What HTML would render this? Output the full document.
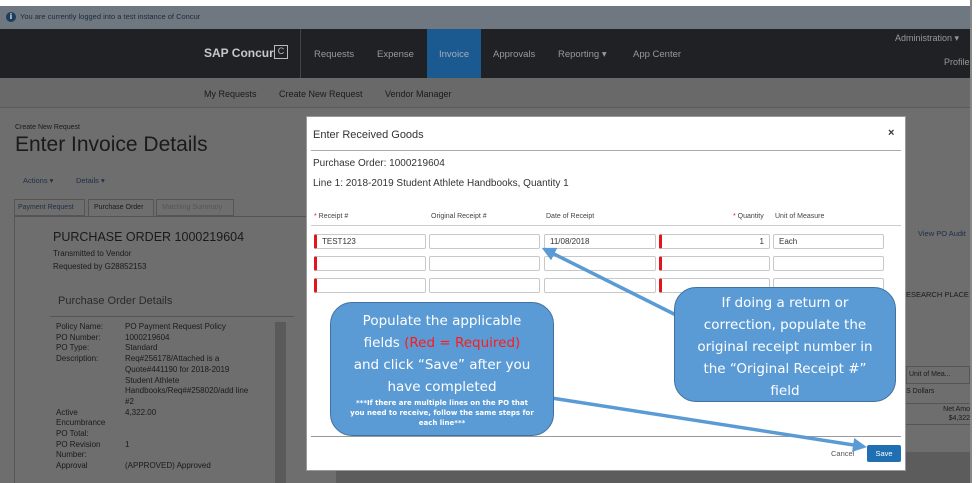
<!DOCTYPE html>
<html><head><meta charset="utf-8"><style>
*{box-sizing:border-box;margin:0;padding:0}
html,body{width:978px;height:483px;overflow:hidden}
body{background:rgb(110,110,110);font-family:"Liberation Sans",sans-serif;position:relative}
.a{position:absolute;white-space:nowrap}
.inp{position:absolute;height:15px;border:1px solid #c8c8c8;border-radius:2px;background:#fff;font-size:8px;color:#333;padding:3px 5px;line-height:8px}
.req{border-left:3px solid #e0161c}
.call{position:absolute;background:#5b9bd5;border:1.5px solid #41719c;border-radius:22px;color:#fff;text-align:center;font-family:"DejaVu Sans",sans-serif}
</style></head><body>
<div class="a" style="left:0;top:0;width:978px;height:6px;background:#fff"></div>
<div class="a" style="left:970px;top:0;width:8px;height:483px;background:#fff;border-left:2px solid #888"></div>
<!-- info bar -->
<div class="a" style="left:0;top:6px;width:970px;height:23px;background:rgb(111,120,128)"></div>
<div class="a" style="left:6px;top:12px;width:10px;height:10px;border-radius:50%;background:#1c3c5c;color:#fff;font-size:8px;text-align:center;line-height:10px;font-weight:bold">i</div>
<div class="a" style="left:20px;top:12px;font-size:7.5px;color:#1d2a3a">You are currently logged into a test instance of Concur</div>
<!-- nav -->
<div class="a" style="left:0;top:29px;width:970px;height:49px;background:rgb(31,33,36)"></div>
<div class="a" style="left:204px;top:46px;font-size:12px;font-weight:bold;color:#c8c8c8">SAP Concur</div>
<div class="a" style="left:274px;top:45px;width:14px;height:14px;border:1.5px solid #bbb;color:#bbb;font-size:9px;text-align:center;line-height:11px">C</div>
<div class="a" style="left:300px;top:29px;width:1px;height:49px;background:#444"></div>
<div class="a" style="left:427px;top:29px;width:54px;height:49px;background:rgb(26,90,145)"></div>
<div class="a" style="left:314px;top:49px;font-size:9.5px;color:#999">Requests</div>
<div class="a" style="left:377px;top:49px;font-size:9.5px;color:#999">Expense</div>
<div class="a" style="left:439px;top:49px;font-size:9.5px;color:#aab">Invoice</div>
<div class="a" style="left:493px;top:49px;font-size:9.5px;color:#999">Approvals</div>
<div class="a" style="left:558px;top:49px;font-size:9.5px;color:#999">Reporting ▾</div>
<div class="a" style="left:633px;top:49px;font-size:9.5px;color:#999">App Center</div>
<div class="a" style="left:895px;top:33px;font-size:9px;color:#999">Administration ▾</div>
<div class="a" style="left:944px;top:57px;font-size:9px;color:#999">Profile</div>
<!-- subnav -->
<div class="a" style="left:0;top:78px;width:970px;height:30px;background:rgb(105,105,105);border-bottom:1px solid #5a5a5a"></div>
<div class="a" style="left:204px;top:89px;font-size:9px;color:#1a1a1a">My Requests</div>
<div class="a" style="left:279px;top:89px;font-size:9px;color:#1a1a1a">Create New Request</div>
<div class="a" style="left:385px;top:89px;font-size:9px;color:#1a1a1a">Vendor Manager</div>
<!-- left content -->
<div class="a" style="left:15px;top:124px;font-size:7px;color:#1a1a1a">Create New Request</div>
<div class="a" style="left:15px;top:133px;font-size:21px;color:#1a1a1a">Enter Invoice Details</div>
<div class="a" style="left:23px;top:176px;font-size:7.5px;color:#1c2f45">Actions ▾</div>
<div class="a" style="left:76px;top:176px;font-size:7.5px;color:#1c2f45">Details ▾</div>
<div class="a" style="left:14px;top:199px;width:71px;height:17px;border:1px solid #555;font-size:7px;color:#1c2f45;padding:4px 3px">Payment Request</div>
<div class="a" style="left:88px;top:199px;width:66px;height:18px;border:1px solid #555;border-bottom:none;background:rgb(110,110,110);font-size:7px;color:#1a1a1a;padding:4px 5px">Purchase Order</div>
<div class="a" style="left:156px;top:199px;width:78px;height:17px;border:1px solid #555;font-size:7px;color:#555;padding:4px 5px">Matching Summary</div>
<div class="a" style="left:14px;top:216px;width:292px;height:1px;background:#555"></div>
<div class="a" style="left:14px;top:216px;width:1px;height:267px;background:#555"></div>
<div class="a" style="left:53px;top:230px;font-size:12.5px;color:#1a1a1a">PURCHASE ORDER 1000219604</div>
<div class="a" style="left:53px;top:247px;font-size:8px;color:#1a1a1a;line-height:13px">Transmitted to Vendor<br>Requested by G28852153</div>
<div class="a" style="left:58px;top:295px;font-size:11px;color:#2a2a2a">Purchase Order Details</div>
<div class="a" style="left:50px;top:316px;width:244px;height:1px;background:#555"></div>
<div class="a" style="left:275px;top:322px;width:11px;height:161px;background:rgb(90,90,90)"></div>
<div class="a" style="left:56px;top:322px;font-size:8px;color:#1a1a1a;line-height:10.7px">Policy Name:<br>PO Number:<br>PO Type:<br>Description:<br><br><br><br><br>Active<br>Encumbrance<br>PO Total:<br>PO Revision<br>Number:<br>Approval</div>
<div class="a" style="left:125px;top:322px;font-size:8px;color:#1a1a1a;line-height:10.7px">PO Payment Request Policy<br>1000219604<br>Standard<br>Req#256178/Attached is a<br>Quote#441190 for 2018-2019<br>Student Athlete<br>Handbooks/Req##258020/add line<br>#2<br>4,322.00<br><br><br>1<br><br>(APPROVED) Approved</div>
<!-- right bg -->
<div class="a" style="left:918px;top:229px;font-size:7.5px;color:#1c2f45">View PO Audit</div>
<div class="a" style="left:906px;top:290px;font-size:7.5px;color:#1a1a1a">ESEARCH PLACE</div>
<div class="a" style="left:906px;top:366px;width:64px;height:18px;border:1px solid #555;font-size:7px;color:#1a1a1a;padding:4px 2px">Unit of Mea...</div>
<div class="a" style="left:906px;top:388px;font-size:7px;color:#1a1a1a">S Dollars</div>
<div class="a" style="left:906px;top:403px;width:64px;height:22px;border-top:1px solid #555;border-bottom:1px solid #555;font-size:7px;color:#1a1a1a;text-align:right;line-height:9px;padding-top:1px">Net Amo<br>$4,322</div>
<div class="a" style="left:336px;top:452px;width:634px;height:31px;background:rgb(92,92,92)"></div>
<!-- modal -->
<div class="a" style="left:306px;top:116px;width:600px;height:355px;background:#fff;border:1px solid #999"></div>
<div class="a" style="left:313px;top:129px;font-size:11px;color:#333">Enter Received Goods</div>
<div class="a" style="left:888px;top:127px;font-size:11px;color:#333;font-weight:bold">×</div>
<div class="a" style="left:311px;top:150px;width:590px;height:1px;background:#aaa"></div>
<div class="a" style="left:313px;top:158px;font-size:10px;color:#333">Purchase Order: 1000219604</div>
<div class="a" style="left:313px;top:178px;font-size:10px;color:#333">Line 1: 2018-2019 Student Athlete Handbooks, Quantity 1</div>
<div class="a" style="left:314px;top:213px;font-size:7px;color:#444"><span style="color:#e0161c">*</span> Receipt #</div>
<div class="a" style="left:431px;top:213px;font-size:7px;color:#444">Original Receipt #</div>
<div class="a" style="left:546px;top:213px;font-size:7px;color:#444">Date of Receipt</div>
<div class="a" style="left:733px;top:213px;font-size:7px;color:#444"><span style="color:#e0161c">*</span> Quantity</div>
<div class="a" style="left:775px;top:213px;font-size:7px;color:#444">Unit of Measure</div>
<div class="a" style="left:311px;top:225px;width:590px;height:1px;background:#ccc"></div>
<div class="inp req" style="left:314px;top:234px;width:112px">TEST123</div>
<div class="inp" style="left:429px;top:234px;width:111px"></div>
<div class="inp" style="left:544px;top:234px;width:112px">11/08/2018</div>
<div class="inp req" style="left:659px;top:234px;width:111px;text-align:right">1</div>
<div class="inp" style="left:773px;top:234px;width:111px">Each</div>
<div class="inp req" style="left:314px;top:256px;width:112px"></div>
<div class="inp" style="left:429px;top:256px;width:111px"></div>
<div class="inp" style="left:544px;top:256px;width:112px"></div>
<div class="inp req" style="left:659px;top:256px;width:111px"></div>
<div class="inp" style="left:773px;top:256px;width:111px"></div>
<div class="inp req" style="left:314px;top:278px;width:112px"></div>
<div class="inp" style="left:429px;top:278px;width:111px"></div>
<div class="inp" style="left:544px;top:278px;width:112px"></div>
<div class="inp req" style="left:659px;top:278px;width:111px"></div>
<div class="inp" style="left:773px;top:278px;width:111px"></div>
<div class="a" style="left:311px;top:436px;width:590px;height:1px;background:#999"></div>
<div class="a" style="left:831px;top:449px;font-size:7.5px;color:#555">Cancel</div>
<div class="a" style="left:867px;top:445px;width:34px;height:17px;background:#1f6fb2;border-radius:2px;color:#fff;font-size:7.5px;text-align:center;line-height:17px">Save</div>
<!-- arrows -->
<svg class="a" style="left:0;top:0" width="978" height="483">
<defs><marker id="m" markerWidth="4" markerHeight="4" refX="2" refY="2" orient="auto"><path d="M0,0 L4,2 L0,4z" fill="#5b9bd5"/></marker></defs>
<line x1="690" y1="322" x2="548" y2="251" stroke="#5b9bd5" stroke-width="3.5" marker-end="url(#m)"/>
<line x1="545" y1="397" x2="860" y2="446" stroke="#5b9bd5" stroke-width="3.5" marker-end="url(#m)"/>
</svg>
<div class="call" style="left:330px;top:302px;width:224px;height:134px;padding-top:7px;font-size:13.5px;line-height:22px">Populate the applicable<br>fields <span style="color:#ff1a1a">(Red = Required)</span><br>and click “Save” after you<br>have completed<div style="font-size:7px;font-weight:bold;line-height:10px">***If there are multiple lines on the PO that<br>you need to receive, follow the same steps for<br>each line***</div></div>
<div class="call" style="left:674px;top:287px;width:222px;height:115px;padding-top:4px;font-size:13.5px;line-height:22px">If doing a return or<br>correction, populate the<br>original receipt number in<br>the “Original Receipt #”<br>field</div>
</body></html>
